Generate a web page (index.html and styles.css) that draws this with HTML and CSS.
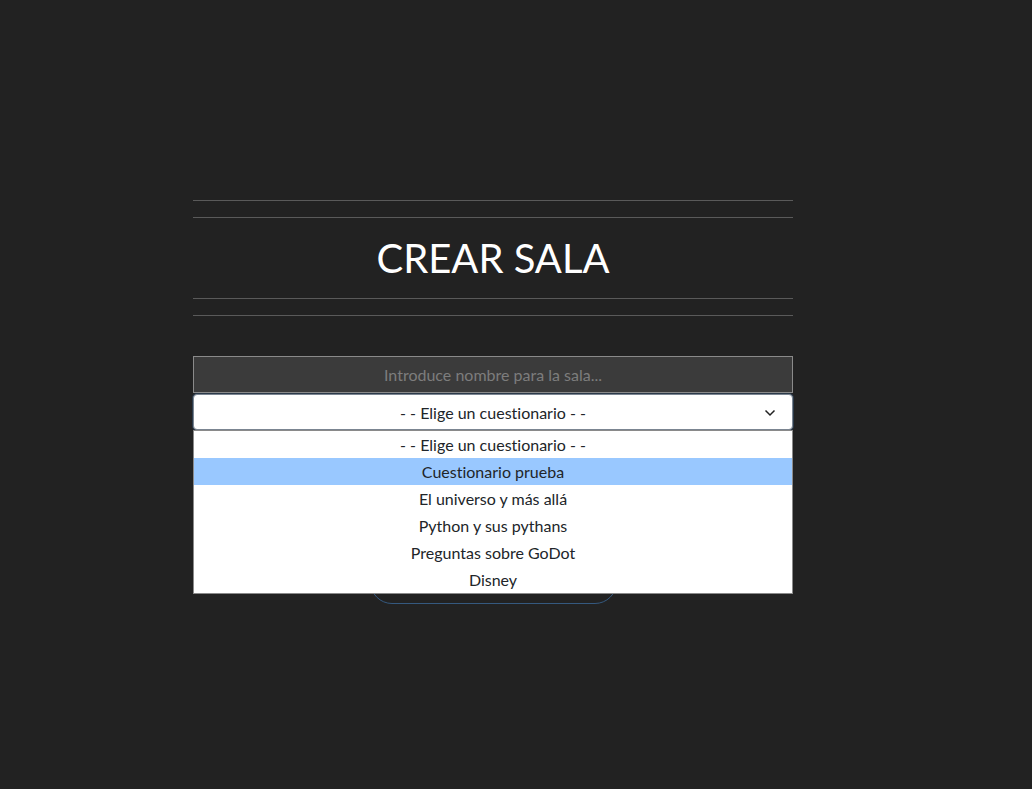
FILE: index.html
```html
<!DOCTYPE html>
<html lang="es">
<head>
<meta charset="utf-8">
<title>Crear sala</title>
<link rel="stylesheet" href="styles.css">
</head>
<body>
<main class="page">
  <div class="rule"></div>
  <div class="rule rule-gap"></div>
  <h1 class="title">CREAR SALA</h1>
  <div class="rule"></div>
  <div class="rule rule-gap"></div>
  <form class="form">
    <div class="field-input">Introduce nombre para la sala...</div>
    <div class="select-wrap">
      <div class="select">
        <span class="select-text">- - Elige un cuestionario - -</span>
        <svg class="chevron" width="12" height="8" viewBox="0 0 12 8"><path d="M1.5 1.5 L6 6 L10.5 1.5" fill="none" stroke="#222" stroke-width="1.5"/></svg>
      </div>
      <ul class="options">
        <li class="option">- - Elige un cuestionario - -</li>
        <li class="option option-active">Cuestionario prueba</li>
        <li class="option">El universo y más allá</li>
        <li class="option">Python y sus pythans</li>
        <li class="option">Preguntas sobre GoDot</li>
        <li class="option">Disney</li>
      </ul>
    </div>
    <div class="button-row">
      <button type="button" class="btn" aria-label="Crear"></button>
    </div>
  </form>
</main>
</body>
</html>
```
FILE: styles.css
```css
html, body {
  margin: 0;
  padding: 0;
  background: #222222;
  font-family: Lato, "Liberation Sans", sans-serif;
  font-variant-ligatures: no-common-ligatures;
}
.page {
  width: 600px;
  margin: 200px 0 0 193px;
}
.rule {
  height: 1px;
  background: #5a5a5a;
}
.rule-gap {
  margin-top: 16px;
}
.title {
  margin: 0;
  height: 80px;
  line-height: 80px;
  text-align: center;
  font-weight: 400;
  font-size: 40px;
  color: #ffffff;
}
.form {
  margin-top: 40px;
  display: flex;
  flex-direction: column;
}
.field-input {
  box-sizing: border-box;
  height: 37px;
  background: #3b3b3b;
  border: 1px solid #8a8a8a;
  color: #7d7d7d;
  font-size: 16px;
  line-height: 35px;
  text-align: center;
}
.select-wrap {
  position: relative;
  margin-top: 1px;
}
.select {
  box-sizing: border-box;
  height: 36px;
  background: #fff;
  border: 1px solid #7b8591;
  border-radius: 4px;
  box-shadow: 0 0 0 1px #2b3a4a;
  display: flex;
  align-items: center;
  justify-content: center;
  position: relative;
  color: #212529;
  font-size: 16px;
}
.chevron {
  position: absolute;
  right: 16px;
  top: 14px;
}
.options {
  position: absolute;
  z-index: 2;
  left: 0;
  right: 0;
  top: 36px;
  margin: 0;
  padding: 0;
  list-style: none;
  background: #fff;
  border: 1px solid #8a8a8a;
}
.option {
  height: 27px;
  line-height: 27px;
  text-align: center;
  font-size: 16px;
  color: #212529;
}
.option-active {
  background: #99c8ff;
}
.button-row {
  display: flex;
  justify-content: center;
  margin-top: 62px;
}
.btn {
  width: 247px;
  height: 112px;
  background: transparent;
  border: 1px solid #35597f;
  border-radius: 22px;
}
```
